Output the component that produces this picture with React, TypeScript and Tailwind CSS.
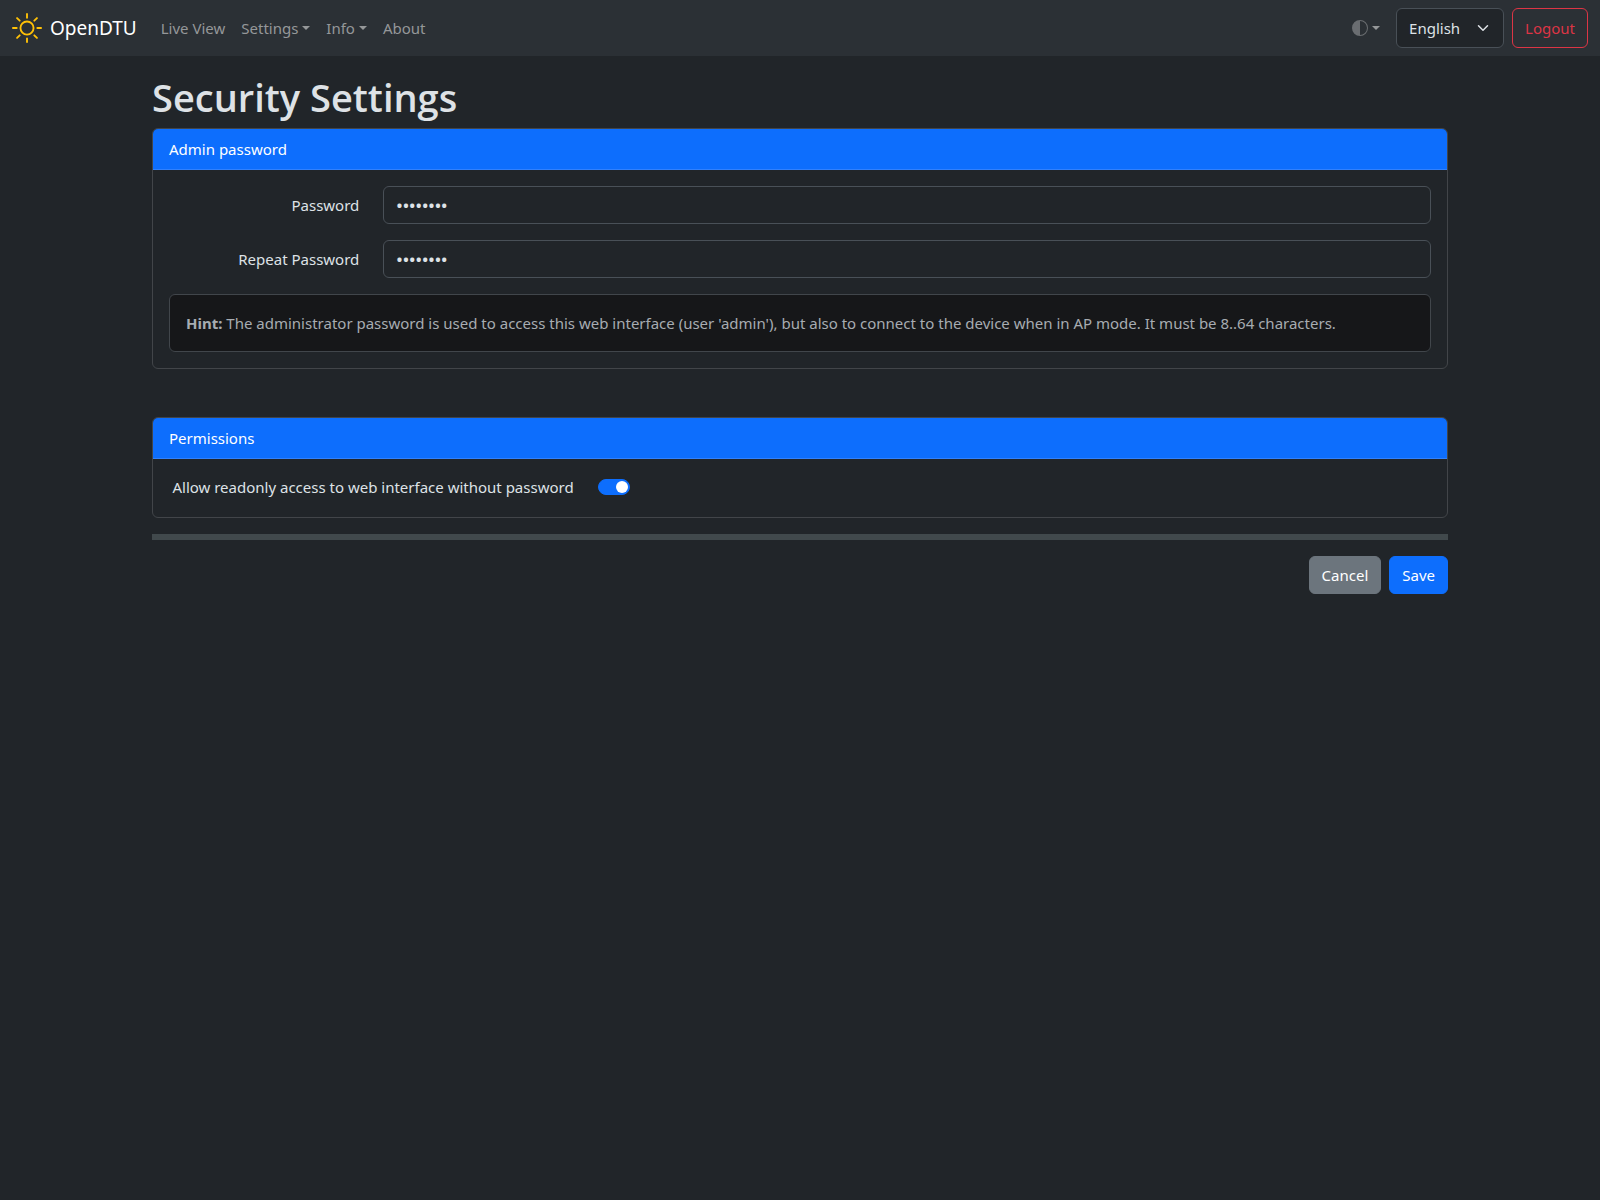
/* --- Imports --- */
import { useState, type ReactNode } from 'react';
import { clsx } from 'clsx';

/* --- Data --- */
type NavItem = { text: string; hasMenu?: boolean };

const navItems: NavItem[] = [
	{ text: 'Live View' },
	{ text: 'Settings', hasMenu: true },
	{ text: 'Info', hasMenu: true },
	{ text: 'About' },
];

/* --- Icons --- */
const SunIcon = () => (
	<svg viewBox="0 0 16 16" className="size-[30px] text-[#ffc107]" fill="currentColor" aria-hidden="true">
		<path d="M8 11a3 3 0 1 1 0-6 3 3 0 0 1 0 6m0 1a4 4 0 1 0 0-8 4 4 0 0 0 0 8M8 0a.5.5 0 0 1 .5.5v2a.5.5 0 0 1-1 0v-2A.5.5 0 0 1 8 0m0 13a.5.5 0 0 1 .5.5v2a.5.5 0 0 1-1 0v-2A.5.5 0 0 1 8 13m8-5a.5.5 0 0 1-.5.5h-2a.5.5 0 0 1 0-1h2a.5.5 0 0 1 .5.5M3 8a.5.5 0 0 1-.5.5h-2a.5.5 0 0 1 0-1h2A.5.5 0 0 1 3 8m10.657-5.657a.5.5 0 0 1 0 .707l-1.414 1.415a.5.5 0 1 1-.707-.708l1.414-1.414a.5.5 0 0 1 .707 0m-9.193 9.193a.5.5 0 0 1 0 .707L3.05 13.657a.5.5 0 0 1-.707-.707l1.414-1.414a.5.5 0 0 1 .707 0m9.193 2.121a.5.5 0 0 1-.707 0l-1.414-1.414a.5.5 0 0 1 .707-.707l1.414 1.414a.5.5 0 0 1 0 .707M4.464 4.465a.5.5 0 0 1-.707 0L2.343 3.05a.5.5 0 1 1 .707-.707l1.414 1.414a.5.5 0 0 1 0 .708" />
	</svg>
);

const CircleHalfIcon = () => (
	<svg viewBox="0 0 16 16" className="size-4 opacity-60" fill="currentColor" aria-hidden="true">
		<path d="M8 15A7 7 0 1 0 8 1zm0 1A8 8 0 1 1 8 0a8 8 0 0 1 0 16" />
	</svg>
);

const Caret = () => (
	<span className="border-x-4 border-t-4 border-x-transparent border-t-current" aria-hidden="true" />
);

/* --- Card Component --- */
const Card = ({ title, className, children }: { title: string; className?: string; children: ReactNode }) => (
	<section className={clsx('rounded-md border border-[#424549] overflow-hidden', className)}>
		<h2 className="px-4 py-2 bg-[#0d6efd] text-white border-b border-[#3181fd]">{title}</h2>
		{children}
	</section>
);

/* --- PasswordRow Component --- */
const PasswordRow = ({ id, label }: { id: string; label: string }) => {
	const [value, setValue] = useState('openDTU4');

	return (
		<div className="flex -mx-3 mb-4">
			<label htmlFor={id} className="w-2/12 px-3 py-[7px] text-right">
				{label}
			</label>
			<div className="w-10/12 px-3">
				<input
					id={id}
					type="password"
					value={value}
					onChange={e => setValue(e.target.value)}
					className="block w-full h-[38px] px-3 rounded-md border border-[#495057] bg-[#212529] text-[17px] font-semibold font-['Open_Sans','Noto_Sans',sans-serif] outline-none focus:border-[#86b7fe]"
				/>
			</div>
		</div>
	);
};

/* --- NavBar Component --- */
const NavBar = () => (
	<header className="flex items-center justify-between h-14 px-3 bg-[#2b3035]">
		<div className="flex items-center">
			<a href="#" className="flex items-center gap-2 mr-4 text-white text-[19px]">
				<SunIcon />
				OpenDTU
			</a>
			<nav>
				<ul className="flex text-[#959799]">
					{navItems.map(({ text, hasMenu }) => (
						<li key={text}>
							{hasMenu ? (
								<button type="button" className="flex items-center gap-1 px-2 py-2 hover:text-white">
									{text}
									<Caret />
								</button>
							) : (
								<a href="#" className="block px-2 py-2 hover:text-white">
									{text}
								</a>
							)}
						</li>
					))}
				</ul>
			</nav>
		</div>

		<div className="flex items-center gap-2">
			<button
				type="button"
				aria-label="Toggle theme"
				className="flex items-center gap-1 px-2 py-2 text-[#959799] hover:text-white"
			>
				<CircleHalfIcon />
				<Caret />
			</button>
			<div className="relative">
				<select
					aria-label="Language"
					className="block w-27 h-10 pl-3 pr-9 rounded-md border border-[#495057] bg-[#212529] appearance-none"
				>
					<option>English</option>
					<option>Deutsch</option>
					<option>Français</option>
				</select>
				<svg
					viewBox="0 0 16 16"
					className="absolute right-[13px] top-3 size-4 p-0.5 pointer-events-none"
					fill="none"
					stroke="#dee2e6"
					strokeLinecap="round"
					strokeLinejoin="round"
					strokeWidth="2"
					aria-hidden="true"
				>
					<path d="m2 5 6 6 6-6" />
				</svg>
			</div>
			<button
				type="button"
				className="h-10 px-3 rounded-md border border-[#dc3545] text-[#dc3545] hover:bg-[#dc3545] hover:text-white"
			>
				Logout
			</button>
		</div>
	</header>
);

/* --- App Component --- */
export default function App() {
	const [readonly, setReadonly] = useState(true);

	return (
		<div className="min-h-screen bg-[#212529] text-[#dee2e6] text-[15px] leading-6 font-['Noto_Sans','Open_Sans',sans-serif]">
			<NavBar />

			<main className="max-w-[1320px] mx-auto px-3 pt-4">
				<h1 className="mb-1.5 text-[38px] leading-[50px] font-semibold font-['Open_Sans','Noto_Sans',sans-serif]">
					Security Settings
				</h1>

				<form onSubmit={e => e.preventDefault()}>
					<Card title="Admin password">
						<div className="p-4">
							<PasswordRow id="password" label="Password" />
							<PasswordRow id="repeat-password" label="Repeat Password" />
							<p className="p-4 rounded-md border border-[#41464b] bg-[#161719] text-[#a7acb1]">
								<b className="font-bold">Hint:</b> The administrator password is used to access this web
								interface (user 'admin'), but also to connect to the device when in AP mode. It must be 8..64
								characters.
							</p>
						</div>
					</Card>

					<Card title="Permissions" className="mt-12">
						<div className="px-4 pt-4 pb-4.5">
							<div className="flex -mx-3">
								<label htmlFor="readonly" className="w-4/12 px-3 text-right whitespace-nowrap">
									Allow readonly access to web interface without password
								</label>
								<div className="w-8/12 px-3 pt-1">
									<input
										id="readonly"
										type="checkbox"
										role="switch"
										checked={readonly}
										onChange={e => setReadonly(e.target.checked)}
										className={clsx(
											'flex items-center w-8 h-4 px-px rounded-full appearance-none border border-[#495057]',
											"before:size-3 before:rounded-full before:bg-[#6c757d] before:content-['']",
											'checked:justify-end checked:border-[#0d6efd] checked:bg-[#0d6efd] checked:before:bg-white'
										)}
									/>
								</div>
							</div>
						</div>
					</Card>

					<hr className="my-4 h-1.5 border-0 bg-[#41494c]" />

					<div className="flex justify-end gap-2 text-white">
						<button
							type="button"
							className="h-[38px] px-3 rounded-md border border-[#6c757d] bg-[#6c757d] hover:bg-[#5c636a]"
						>
							Cancel
						</button>
						<button
							type="submit"
							className="h-[38px] px-3 rounded-md border border-[#0d6efd] bg-[#0d6efd] hover:bg-[#0b5ed7]"
						>
							Save
						</button>
					</div>
				</form>
			</main>
		</div>
	);
}
